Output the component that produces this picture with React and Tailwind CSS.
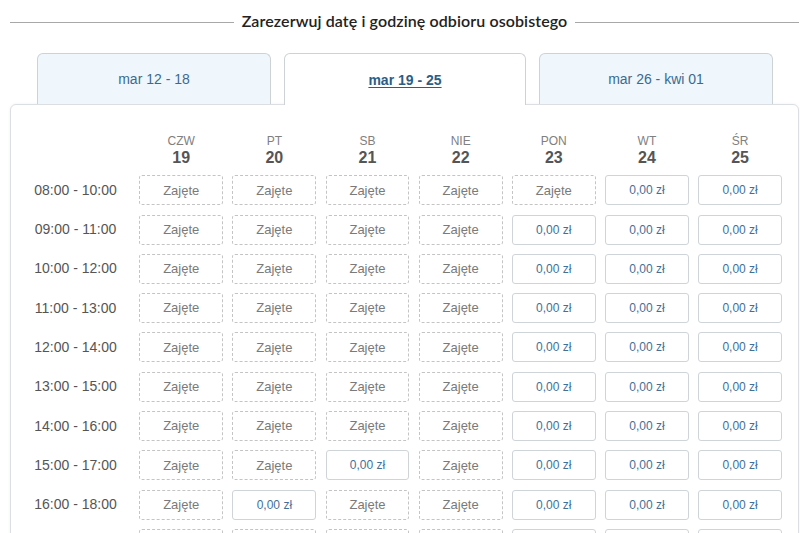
import React from 'react';

const tygodnie = [
  { id: 1, label: 'mar 12 - 18' },
  { id: 2, label: 'mar 19 - 25', aktywny: true },
  { id: 3, label: 'mar 26 - kwi 01' },
];

const dni = [
  { nazwa: 'CZW', nr: 19 },
  { nazwa: 'PT', nr: 20 },
  { nazwa: 'SB', nr: 21 },
  { nazwa: 'NIE', nr: 22 },
  { nazwa: 'PON', nr: 23 },
  { nazwa: 'WT', nr: 24 },
  { nazwa: 'ŚR', nr: 25 },
];

// Z = zajęte, W = wolne
const sloty = [
  { godz: '08:00 - 10:00', stan: 'ZZZZZWW' },
  { godz: '09:00 - 11:00', stan: 'ZZZZWWW' },
  { godz: '10:00 - 12:00', stan: 'ZZZZWWW' },
  { godz: '11:00 - 13:00', stan: 'ZZZZWWW' },
  { godz: '12:00 - 14:00', stan: 'ZZZZWWW' },
  { godz: '13:00 - 15:00', stan: 'ZZZZWWW' },
  { godz: '14:00 - 16:00', stan: 'ZZZZWWW' },
  { godz: '15:00 - 17:00', stan: 'ZZWZWWW' },
  { godz: '16:00 - 18:00', stan: 'ZWZZWWW' },
  { godz: '17:00 - 19:00', stan: 'ZZZZWWW' },
];

const Komorka = ({ zajete }) =>
  zajete ? (
    <div className="h-[30px] flex items-center justify-center border border-dashed border-[#c4c4c4] rounded-[3px] text-[13px] text-[#7a7a7a]">
      Zajęte
    </div>
  ) : (
    <button className="h-[30px] flex items-center justify-center border border-[#cfd4d8] rounded-[3px] bg-white text-[12px] text-[#3f7099]">
      0,00 zł
    </button>
  );

const App = () => {
  return (
    <div className="h-[533px] overflow-hidden bg-white pl-[10px] pr-[1px] font-['Liberation_Sans',Arial,sans-serif]">
      <div className="flex items-center h-[42px]">
        <div className="flex-1 h-px bg-[#a8a8a8] mt-[3px]" />
        <h2 className="px-[8px] text-[16px] font-semibold text-[#222] font-['Lato','Open_Sans',sans-serif] tracking-[0.1px]">
          Zarezerwuj datę i godzinę odbioru osobistego
        </h2>
        <div className="flex-1 h-px bg-[#a8a8a8] mt-[3px]" />
      </div>

      <div className="flex gap-[13px] pl-[27px] mt-[11px] relative z-10">
        {tygodnie.map((t) => (
          <div
            key={t.id}
            className={
              t.aktywny
                ? 'w-[242px] h-[52px] -mb-px flex items-center justify-center pt-[1px] rounded-t-[6px] border border-b-0 border-[#cdd2d6] bg-white text-[14px] font-bold text-[#2c5d86] underline underline-offset-2'
                : 'w-[234px] h-[51px] flex items-center justify-center pt-[1px] rounded-t-[6px] border border-b-0 border-[#cdd2d6] bg-[#eff6fc] text-[14px] text-[#3c6a8f]'
            }
          >
            {t.label}
          </div>
        ))}
      </div>

      <div className="border border-[#dcdfe2] rounded-t-[6px] bg-white pr-[16px] shadow-[0_0_3px_rgba(0,0,0,0.06)]">
        <div className="grid grid-cols-[119px_repeat(7,minmax(0,1fr))] gap-x-[9.33px] gap-y-[9.3px] pt-[29px]">
          <div />
          {dni.map((d) => (
            <div key={d.nr} className="flex flex-col items-center -mb-[1px]">
              <span className="text-[12px] leading-[14px] text-[#808080]">{d.nazwa}</span>
              <span className="text-[16px] leading-[19px] font-bold text-[#555]">{d.nr}</span>
            </div>
          ))}
          {sloty.map((s) => (
            <React.Fragment key={s.godz}>
              <div className="h-[30px] flex items-center justify-center pl-[10px] text-[14px] text-[#555]">
                {s.godz}
              </div>
              {s.stan.split('').map((c, i) => (
                <Komorka key={i} zajete={c === 'Z'} />
              ))}
            </React.Fragment>
          ))}
        </div>
      </div>
    </div>
  );
};

export default App;
